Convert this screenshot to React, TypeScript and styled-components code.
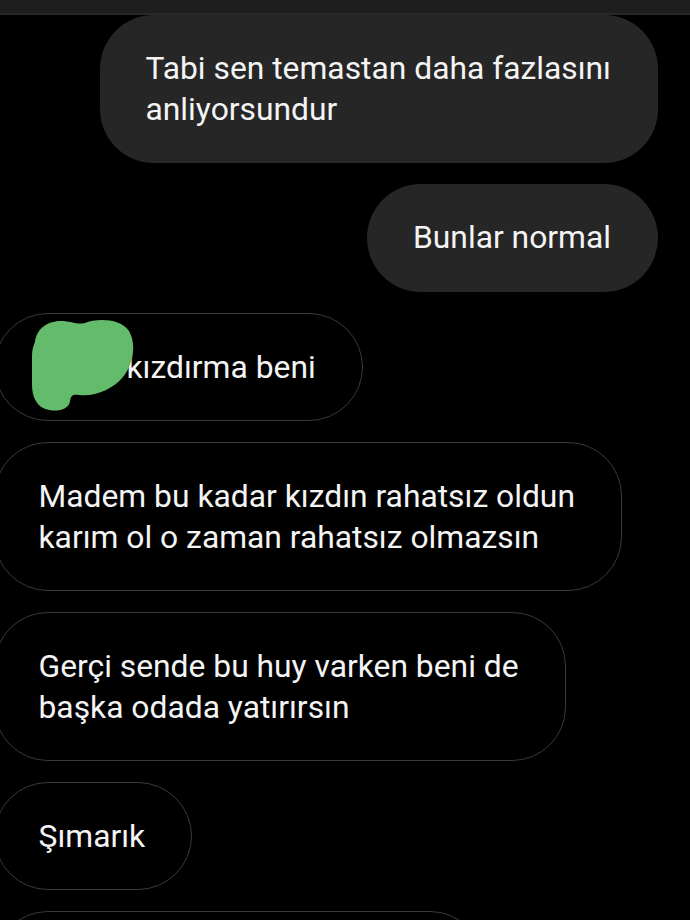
import React from "react";
import styled, { createGlobalStyle } from "styled-components";

const GlobalStyle = createGlobalStyle`
  html, body {
    margin: 0;
    padding: 0;
    background: #000;
    overflow: hidden;
  }
  body {
    font-family: Roboto, "Noto Sans", sans-serif;
  }
`;

const Screen = styled.div`
  width: 690px;
  height: 920px;
  background: #000;
  overflow: hidden;
  display: flex;
  flex-direction: column;
`;

const StatusStrip = styled.div`
  height: 13px;
  background: #1e1e1e;
  border-bottom: 2px solid #282828;
  flex-shrink: 0;
`;

const Thread = styled.div`
  display: flex;
  flex-direction: column;
  gap: 21px;
`;

const Bubble = styled.div<{ $mine?: boolean; $width?: number }>`
  position: relative;
  box-sizing: border-box;
  align-self: ${(p) => (p.$mine ? "flex-end" : "flex-start")};
  margin: ${(p) => (p.$mine ? "0 32px 0 0" : "0 0 0 -6px")};
  padding: ${(p) => (p.$mine ? "33px 47px 33px 46px" : "32.5px 46px 32.5px 43.5px")};
  width: ${(p) => (p.$width ? `${p.$width}px` : "auto")};
  min-height: 108px;
  border-radius: 54px;
  background: ${(p) => (p.$mine ? "#262626" : "#000")};
  border: ${(p) => (p.$mine ? "none" : "1.5px solid #3a3a3a")};
  color: #f4f4f4;
  font-size: 31.8px;
  line-height: 41px;
  white-space: nowrap;
`;

const Hidden = styled.span`
  display: inline-block;
  width: 88px;
`;

const Scribble = styled.svg`
  position: absolute;
  top: 3px;
  left: 34px;
  width: 110px;
  height: 100px;
`;

type Msg = { mine?: boolean; lines: string[] };

const messages: Msg[] = [
  { mine: true, lines: ["Tabi sen temastan daha fazlasını", "anliyorsundur"] },
  { mine: true, lines: ["Bunlar normal"] },
];

const later: Msg[] = [
  { lines: ["Madem bu kadar kızdın rahatsız oldun", "karım ol o zaman rahatsız olmazsın"] },
  { lines: ["Gerçi sende bu huy varken beni de", "başka odada yatırırsın"] },
  { lines: ["Şımarık"] },
];

function Lines({ lines }: { lines: string[] }) {
  return (
    <>
      {lines.map((l, i) => (
        <React.Fragment key={i}>
          {i > 0 && <br />}
          {l}
        </React.Fragment>
      ))}
    </>
  );
}

export default function App() {
  return (
    <Screen>
      <GlobalStyle />
      <StatusStrip />
      <Thread>
        {messages.map((m, i) => (
          <Bubble key={i} $mine={m.mine}>
            <Lines lines={m.lines} />
          </Bubble>
        ))}
        <Bubble>
          <Hidden />
          kızdırma beni
          <Scribble viewBox="0 0 110 100">
            <path
              d="M6 25 C8 10 20 4 32 4 C42 4 48 8 56 6 C66 2 90 0 100 14 C108 28 104 48 94 60 C84 72 66 80 50 78 C44 77 42 78 41 84 C40 92 30 95 20 93 C8 91 3 80 3 68 L3 40 C3 33 4 30 6 25 Z"
              fill="#64bb6b"
            />
          </Scribble>
        </Bubble>
        {later.map((m, i) => (
          <Bubble key={i}>
            <Lines lines={m.lines} />
          </Bubble>
        ))}
        <Bubble $width={490} />
      </Thread>
    </Screen>
  );
}
